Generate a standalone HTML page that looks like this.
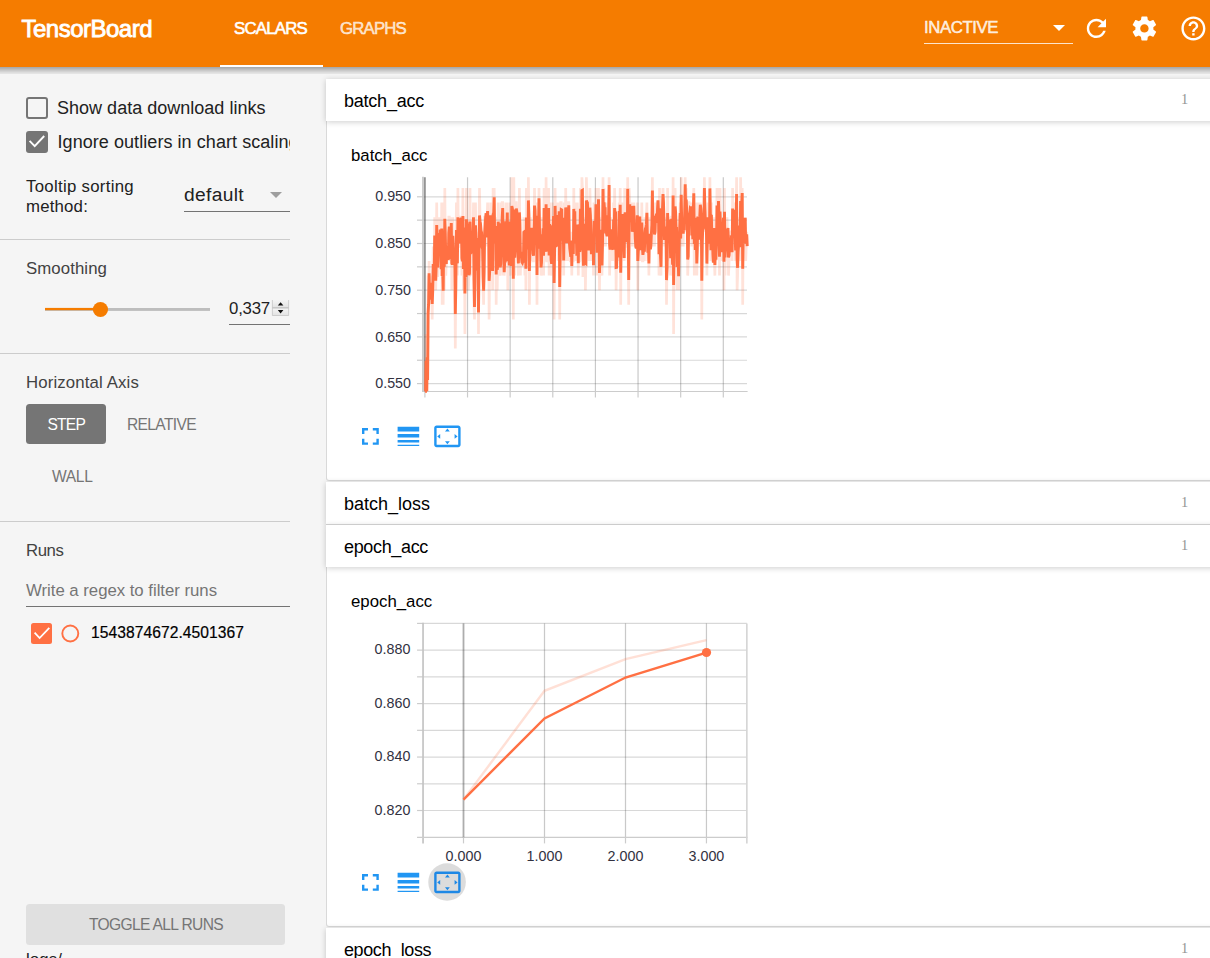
<!DOCTYPE html>
<html lang="en">
<head>
<meta charset="utf-8">
<title>TensorBoard</title>
<style>
html,body{margin:0;padding:0}
body{width:1210px;height:958px;overflow:hidden;background:#f5f5f5;position:relative;font-family:"Liberation Sans",Arial,sans-serif;-webkit-font-smoothing:antialiased}
.b,.t,.ic{position:absolute;display:block}
.t{white-space:nowrap;line-height:24px;height:24px}
.hd{position:absolute;left:0;top:0;z-index:6}
.sb,.ct{position:absolute;left:0;top:0}
.tk{font-family:"Liberation Sans",Arial,sans-serif;font-size:14.3px;fill:#32313f}
</style>
</head>
<body>
<header class="b" style="left:0;top:0;width:1210px;height:67px;background:#f57c00;z-index:5"></header>
<div class="b" style="left:-20px;top:67px;width:1250px;height:7px;z-index:4;box-shadow:inset 0 6px 7px -3px rgba(0,0,0,0.4)"></div>
<nav class="hd">
<div id="title" class="t " style="left:21.50px;top:17.00px;font-size:24.00px;color:#fff;font-weight:400;font-family:'Liberation Sans',Arial,sans-serif;letter-spacing:-0.507px;-webkit-text-stroke:0.85px #fff;">TensorBoard</div>
<div id="tab1" class="t " style="left:234.00px;top:17.00px;font-size:16.80px;color:#fff;font-weight:400;font-family:'Liberation Sans',Arial,sans-serif;letter-spacing:-0.763px;-webkit-text-stroke:0.6px #fff;">SCALARS</div>
<div id="tab2" class="t " style="left:340.00px;top:17.00px;font-size:16.80px;color:rgba(255,255,255,0.72);font-weight:400;font-family:'Liberation Sans',Arial,sans-serif;letter-spacing:-0.812px;-webkit-text-stroke:0.6px rgba(255,255,255,0.72);">GRAPHS</div>
<div class="b" style="left:220.00px;top:65.00px;width:102.60px;height:2.00px;background:#fff"></div>
<div id="inactive" class="t " style="left:924.00px;top:16.00px;font-size:16.80px;color:rgba(255,255,255,0.82);font-weight:400;font-family:'Liberation Sans',Arial,sans-serif;letter-spacing:-0.426px;-webkit-text-stroke:0.55px rgba(255,255,255,0.82);">INACTIVE</div>
<div class="b" style="left:924.00px;top:43.00px;width:149.00px;height:1.00px;background:rgba(255,255,255,0.8)"></div>
<svg class="ic" style="left:1052.5px;top:25px" width="12" height="7" viewBox="0 0 12 7"><path d="M0 0h12L6 6z" fill="#fff"/></svg>
<svg class="ic" style="left:1082.00px;top:13.60px" width="28.80" height="28.80" viewBox="0 0 24 24"><path fill="#fff" d="M17.65 6.35C16.2 4.9 14.21 4 12 4c-4.42 0-7.99 3.58-7.99 8s3.57 8 7.99 8c3.73 0 6.84-2.55 7.73-6h-2.08c-.82 2.33-3.04 4-5.65 4-3.31 0-6-2.69-6-6s2.69-6 6-6c1.66 0 3.14.69 4.22 1.78L13 11h7V4l-2.35 2.35z"/></svg>
<svg class="ic" style="left:1130.40px;top:13.60px" width="28.80" height="28.80" viewBox="0 0 24 24"><path fill="#fff" d="M19.43 12.98c.04-.32.07-.64.07-.98s-.03-.66-.07-.98l2.11-1.65c.19-.15.24-.42.12-.64l-2-3.46c-.12-.22-.39-.3-.61-.22l-2.49 1c-.52-.4-1.08-.73-1.69-.98l-.38-2.65C14.46 2.18 14.25 2 14 2h-4c-.25 0-.46.18-.49.42l-.38 2.65c-.61.25-1.17.59-1.69.98l-2.49-1c-.23-.09-.49 0-.61.22l-2 3.46c-.13.22-.07.49.12.64l2.11 1.65c-.04.32-.07.65-.07.98s.03.66.07.98l-2.11 1.65c-.19.15-.24.42-.12.64l2 3.46c.12.22.39.3.61.22l2.49-1c.52.4 1.08.73 1.69.98l.38 2.65c.03.24.24.42.49.42h4c.25 0 .46-.18.49-.42l.38-2.65c.61-.25 1.17-.59 1.69-.98l2.49 1c.23.09.49 0 .61-.22l2-3.46c.12-.22.07-.49-.12-.64l-2.11-1.65zM12 15.5c-1.93 0-3.5-1.57-3.5-3.5s1.57-3.5 3.5-3.5 3.5 1.57 3.5 3.5-1.57 3.5-3.5 3.5z"/></svg>
<svg class="ic" style="left:1178.90px;top:13.60px" width="28.80" height="28.80" viewBox="0 0 24 24"><path fill="#fff" d="M11 18h2v-2h-2v2zm1-16C6.48 2 2 6.48 2 12s4.48 10 10 10 10-4.48 10-10S17.52 2 12 2zm0 18c-4.41 0-8-3.59-8-8s3.59-8 8-8 8 3.59 8 8-3.59 8-8 8zm0-14c-2.21 0-4 1.79-4 4h2c0-1.1.9-2 2-2s2 .9 2 2c0 2-3 1.75-3 5h2c0-2.25 3-2.5 3-5 0-2.21-1.79-4-4-4z"/></svg>
</nav>
<aside class="sb">
<div class="b" style="left:26.00px;top:97.00px;width:22.00px;height:22.00px;box-sizing:border-box;border:2.4px solid #757575;border-radius:3px"></div>
<div id="cb1" class="t " style="left:57.00px;top:96.00px;font-size:18.00px;color:#212121;font-weight:400;font-family:'Liberation Sans',Arial,sans-serif;letter-spacing:0.015px;">Show data download links</div>
<div class="b" style="left:26.00px;top:131.00px;width:22.00px;height:22.00px;background:#757575;border-radius:3px"></div>
<svg class="ic" style="left:26px;top:131px" width="22" height="22" viewBox="0 0 22 22"><path d="M3.600 9.900L8.700 15.200L18.200 5" fill="none" stroke="#fff" stroke-width="1.900"/></svg>
<div class="b" style="left:57.5px;top:120px;width:232.5px;height:40px;overflow:hidden"><div id="cb2" class="t " style="left:0.00px;top:10.00px;font-size:18.00px;color:#212121;font-weight:400;font-family:'Liberation Sans',Arial,sans-serif;letter-spacing:0.062px;">Ignore outliers in chart scaling</div></div>
<div id="tt1" class="t " style="left:26.00px;top:175.00px;font-size:16.80px;color:#212121;font-weight:400;font-family:'Liberation Sans',Arial,sans-serif;letter-spacing:0.297px;">Tooltip sorting</div>
<div id="tt2" class="t " style="left:26.00px;top:195.00px;font-size:16.80px;color:#212121;font-weight:400;font-family:'Liberation Sans',Arial,sans-serif;letter-spacing:0.194px;">method:</div>
<div id="dflt" class="t " style="left:184.00px;top:183.00px;font-size:19.20px;color:#212121;font-weight:400;font-family:'Liberation Sans',Arial,sans-serif;letter-spacing:0.342px;">default</div>
<div class="b" style="left:184.00px;top:211.00px;width:106.00px;height:1.00px;background:#737373"></div>
<svg class="ic" style="left:270px;top:192px" width="12" height="6" viewBox="0 0 12 6"><path d="M0 0h12L6 6z" fill="#9e9e9e"/></svg>
<div class="b" style="left:0.00px;top:239.00px;width:290.00px;height:1.00px;background:#ccc"></div>
<div id="smooth" class="t " style="left:26.00px;top:257.00px;font-size:16.80px;color:#424242;font-weight:400;font-family:'Liberation Sans',Arial,sans-serif;letter-spacing:0.085px;">Smoothing</div>
<svg class="ic" style="left:40px;top:300px" width="180" height="20" viewBox="40 300 180 20"><rect x="45" y="308" width="165" height="2.900" fill="#bdbdbd"/><rect x="45" y="307.900" width="55" height="2.300" fill="#f57c00"/><circle cx="100.450" cy="309.500" r="7.600" fill="#f57c00"/></svg>
<div id="sval" class="t " style="left:229.00px;top:297.00px;font-size:16.80px;color:#212121;font-weight:400;font-family:'Liberation Sans',Arial,sans-serif;letter-spacing:-0.200px;">0,337</div>
<svg class="ic" style="left:271px;top:299px" width="20" height="18" viewBox="271 299 20 18"><defs><linearGradient id="sg" x1="0" y1="0" x2="0" y2="1"><stop offset="0" stop-color="#f4f4f4"/><stop offset="1" stop-color="#e2e2e2"/></linearGradient></defs><rect x="272" y="300" width="17" height="7.800" fill="url(#sg)"/><rect x="272" y="308.300" width="17" height="7.500" fill="url(#sg)"/><rect x="272" y="307.400" width="17" height="1" fill="#b4b4b4"/><path d="M272.400 300v15.500h16.200V300" fill="none" stroke="#c6c6c6" stroke-width="0.800"/><path d="M277.800 305.600h5.600l-2.800-3.400zM277.800 310h5.600l-2.800 3.400z" fill="#111"/></svg>
<div class="b" style="left:229.00px;top:323.50px;width:61.00px;height:1.00px;background:#737373"></div>
<div class="b" style="left:0.00px;top:352.50px;width:290.00px;height:1.00px;background:#ccc"></div>
<div id="haxis" class="t " style="left:26.00px;top:371.00px;font-size:16.80px;color:#424242;font-weight:400;font-family:'Liberation Sans',Arial,sans-serif;letter-spacing:0.133px;">Horizontal Axis</div>
<div class="b" style="left:26.00px;top:404.00px;width:80.00px;height:40.00px;background:#757575;border-radius:3.500px"></div>
<div id="step" class="t " style="left:47.50px;top:413.00px;font-size:15.60px;color:#fff;font-weight:400;font-family:'Liberation Sans',Arial,sans-serif;letter-spacing:-0.809px;">STEP</div>
<div id="rel" class="t " style="left:127.00px;top:413.00px;font-size:15.60px;color:#757575;font-weight:400;font-family:'Liberation Sans',Arial,sans-serif;letter-spacing:-0.656px;">RELATIVE</div>
<div id="wall" class="t " style="left:52.00px;top:465.00px;font-size:15.60px;color:#757575;font-weight:400;font-family:'Liberation Sans',Arial,sans-serif;letter-spacing:-0.348px;">WALL</div>
<div class="b" style="left:0.00px;top:520.50px;width:290.00px;height:1.00px;background:#ccc"></div>
<div id="runs" class="t " style="left:26.00px;top:539.00px;font-size:16.80px;color:#424242;font-weight:400;font-family:'Liberation Sans',Arial,sans-serif;letter-spacing:-0.422px;">Runs</div>
<div id="regex" class="t " style="left:26.00px;top:579.00px;font-size:16.80px;color:#757575;font-weight:400;font-family:'Liberation Sans',Arial,sans-serif;letter-spacing:-0.029px;">Write a regex to filter runs</div>
<div class="b" style="left:26.00px;top:605.50px;width:264.00px;height:1.00px;background:#737373"></div>
<div class="b" style="left:31.00px;top:623.00px;width:21.00px;height:21.00px;background:#ff7043;border-radius:2.5px"></div>
<svg class="ic" style="left:31px;top:623px" width="21" height="21" viewBox="0 0 21 21"><path d="M3.600 9.700L8.600 15L18.300 4.900" fill="none" stroke="#fff" stroke-width="1.800"/></svg>
<svg class="ic" style="left:60px;top:623px" width="21" height="21" viewBox="0 0 21 21"><circle cx="10.300" cy="10.500" r="8" fill="none" stroke="#ff7043" stroke-width="1.900"/></svg>
<div id="run" class="t " style="left:91.00px;top:621.00px;font-size:15.60px;color:#000;font-weight:400;font-family:'Liberation Sans',Arial,sans-serif;letter-spacing:0.069px;-webkit-text-stroke:0.2px #000;">1543874672.4501367</div>
<div class="b" style="left:26.00px;top:904.30px;width:259.00px;height:40.30px;background:#e0e0e0;border-radius:3.5px"></div>
<div id="toggle" class="t " style="left:89.00px;top:913.00px;font-size:15.60px;color:#757575;font-weight:400;font-family:'Liberation Sans',Arial,sans-serif;letter-spacing:-0.658px;">TOGGLE ALL RUNS</div>
<div id="logs" class="t " style="left:26.00px;top:948.00px;font-size:16.80px;color:#212121;font-weight:400;font-family:'Liberation Sans',Arial,sans-serif;letter-spacing:0.109px;">logs/</div>
</aside>
<main class="ct">
<div class="b" style="left:326.00px;top:79.00px;width:920.00px;height:42.00px;background:#fff;box-shadow:0 1.2px 6px rgba(0,0,0,0.2);z-index:2"></div><div id="h1" class="t " style="left:344.00px;top:88.80px;font-size:18.00px;color:#000;font-weight:400;font-family:'Liberation Sans',Arial,sans-serif;letter-spacing:-0.229px;z-index:3;">batch_acc</div><div id="n1" class="t " style="left:1181.00px;top:87.00px;font-size:14.40px;color:#949494;font-weight:400;font-family:'Liberation Serif',serif;z-index:3;">1</div>
<div class="b" style="left:326.00px;top:121.00px;width:890.00px;height:360.00px;background:#fff;border:1px solid #d9d9d9;border-top:0;border-radius:0 0 0 3px;box-sizing:border-box"></div>
<div id="ct1" class="t " style="left:351.00px;top:144.00px;font-size:16.80px;color:#000;font-weight:400;font-family:'Liberation Sans',Arial,sans-serif;">batch_acc</div><svg class="ic ch" style="left:340px;top:161px" width="440" height="300" viewBox="340 161 440 300"><line x1="423.00" y1="196.80" x2="747.00" y2="196.80" stroke="#3c3c3c" stroke-width="1.2" stroke-opacity="0.2"/><line x1="417.00" y1="196.80" x2="423.00" y2="196.80" stroke="#cccccc" stroke-width="1.2" stroke-opacity="1"/><line x1="423.00" y1="220.15" x2="747.00" y2="220.15" stroke="#3c3c3c" stroke-width="1.2" stroke-opacity="0.2"/><line x1="417.00" y1="220.15" x2="423.00" y2="220.15" stroke="#cccccc" stroke-width="1.2" stroke-opacity="1"/><line x1="423.00" y1="243.50" x2="747.00" y2="243.50" stroke="#3c3c3c" stroke-width="1.2" stroke-opacity="0.2"/><line x1="417.00" y1="243.50" x2="423.00" y2="243.50" stroke="#cccccc" stroke-width="1.2" stroke-opacity="1"/><line x1="423.00" y1="266.85" x2="747.00" y2="266.85" stroke="#3c3c3c" stroke-width="1.2" stroke-opacity="0.2"/><line x1="417.00" y1="266.85" x2="423.00" y2="266.85" stroke="#cccccc" stroke-width="1.2" stroke-opacity="1"/><line x1="423.00" y1="290.20" x2="747.00" y2="290.20" stroke="#3c3c3c" stroke-width="1.2" stroke-opacity="0.2"/><line x1="417.00" y1="290.20" x2="423.00" y2="290.20" stroke="#cccccc" stroke-width="1.2" stroke-opacity="1"/><line x1="423.00" y1="313.55" x2="747.00" y2="313.55" stroke="#3c3c3c" stroke-width="1.2" stroke-opacity="0.2"/><line x1="417.00" y1="313.55" x2="423.00" y2="313.55" stroke="#cccccc" stroke-width="1.2" stroke-opacity="1"/><line x1="423.00" y1="336.90" x2="747.00" y2="336.90" stroke="#3c3c3c" stroke-width="1.2" stroke-opacity="0.2"/><line x1="417.00" y1="336.90" x2="423.00" y2="336.90" stroke="#cccccc" stroke-width="1.2" stroke-opacity="1"/><line x1="423.00" y1="360.25" x2="747.00" y2="360.25" stroke="#3c3c3c" stroke-width="1.2" stroke-opacity="0.2"/><line x1="417.00" y1="360.25" x2="423.00" y2="360.25" stroke="#cccccc" stroke-width="1.2" stroke-opacity="1"/><line x1="423.00" y1="383.60" x2="747.00" y2="383.60" stroke="#3c3c3c" stroke-width="1.2" stroke-opacity="0.2"/><line x1="417.00" y1="383.60" x2="423.00" y2="383.60" stroke="#cccccc" stroke-width="1.2" stroke-opacity="1"/><line x1="467.53" y1="177.30" x2="467.53" y2="391.50" stroke="#3c3c3c" stroke-width="1.2" stroke-opacity="0.28"/><line x1="467.53" y1="391.50" x2="467.53" y2="397.50" stroke="#cccccc" stroke-width="1.2" stroke-opacity="1"/><line x1="510.16" y1="177.30" x2="510.16" y2="391.50" stroke="#3c3c3c" stroke-width="1.2" stroke-opacity="0.28"/><line x1="510.16" y1="391.50" x2="510.16" y2="397.50" stroke="#cccccc" stroke-width="1.2" stroke-opacity="1"/><line x1="552.79" y1="177.30" x2="552.79" y2="391.50" stroke="#3c3c3c" stroke-width="1.2" stroke-opacity="0.28"/><line x1="552.79" y1="391.50" x2="552.79" y2="397.50" stroke="#cccccc" stroke-width="1.2" stroke-opacity="1"/><line x1="595.42" y1="177.30" x2="595.42" y2="391.50" stroke="#3c3c3c" stroke-width="1.2" stroke-opacity="0.28"/><line x1="595.42" y1="391.50" x2="595.42" y2="397.50" stroke="#cccccc" stroke-width="1.2" stroke-opacity="1"/><line x1="638.05" y1="177.30" x2="638.05" y2="391.50" stroke="#3c3c3c" stroke-width="1.2" stroke-opacity="0.28"/><line x1="638.05" y1="391.50" x2="638.05" y2="397.50" stroke="#cccccc" stroke-width="1.2" stroke-opacity="1"/><line x1="680.68" y1="177.30" x2="680.68" y2="391.50" stroke="#3c3c3c" stroke-width="1.2" stroke-opacity="0.28"/><line x1="680.68" y1="391.50" x2="680.68" y2="397.50" stroke="#cccccc" stroke-width="1.2" stroke-opacity="1"/><line x1="723.31" y1="177.30" x2="723.31" y2="391.50" stroke="#3c3c3c" stroke-width="1.2" stroke-opacity="0.28"/><line x1="723.31" y1="391.50" x2="723.31" y2="397.50" stroke="#cccccc" stroke-width="1.2" stroke-opacity="1"/><line x1="423.00" y1="176.70" x2="423.00" y2="392.10" stroke="#c4c4c4" stroke-width="1.7" stroke-opacity="1"/><line x1="422.15" y1="391.50" x2="747.60" y2="391.50" stroke="#cccccc" stroke-width="1.2" stroke-opacity="1"/><line x1="424.90" y1="177.30" x2="424.90" y2="391.50" stroke="#3c3c3c" stroke-width="1.8" stroke-opacity="0.55"/><line x1="424.90" y1="391.50" x2="424.90" y2="397.50" stroke="#cccccc" stroke-width="1.2" stroke-opacity="1"/><polyline points="425.1,391.2 425.6,391.2 426.1,334.0 426.6,391.2 427.1,334.0 427.6,391.2 428.1,275.6 428.6,304.8 429.1,261.0 429.6,304.8 430.1,275.6 430.6,290.2 431.1,304.8 431.7,275.6 432.2,319.4 432.7,290.2 433.2,246.4 433.7,275.6 434.2,275.6 434.7,217.2 435.2,261.0 435.7,290.2 436.2,261.0 436.7,202.6 437.2,275.6 437.7,275.6 438.2,217.2 438.7,261.0 439.2,261.0 439.7,246.4 440.2,217.2 440.7,261.0 441.2,275.6 441.7,202.6 442.2,304.8 442.7,261.0 443.2,304.8 443.8,202.6 444.3,290.2 444.8,188.0 445.3,246.4 445.8,275.6 446.3,261.0 446.8,246.4 447.3,246.4 447.8,246.4 448.3,261.0 448.8,217.2 449.3,217.2 449.8,246.4 450.3,261.0 450.8,231.8 451.3,217.2 451.8,290.2 452.3,261.0 452.8,217.2 453.3,261.0 453.8,261.0 454.3,246.4 454.8,246.4 455.3,348.6 455.8,275.6 456.4,202.6 456.9,246.4 457.4,275.6 457.9,188.0 458.4,246.4 458.9,246.4 459.4,217.2 459.9,217.2 460.4,231.8 460.9,217.2 461.4,217.2 461.9,275.6 462.4,261.0 462.9,188.0 463.4,290.2 463.9,261.0 464.4,217.2 464.9,334.0 465.4,231.8 465.9,290.2 466.4,188.0 466.9,231.8 467.4,231.8 467.9,231.8 468.4,290.2 469.0,275.6 469.5,275.6 470.0,188.0 470.5,275.6 471.0,246.4 471.5,246.4 472.0,231.8 472.5,231.8 473.0,231.8 473.5,202.6 474.0,304.8 474.5,319.4 475.0,231.8 475.5,202.6 476.0,246.4 476.5,261.0 477.0,231.8 477.5,290.2 478.0,261.0 478.5,334.0 479.0,231.8 479.5,188.0 480.0,217.2 480.5,231.8 481.1,231.8 481.6,231.8 482.1,261.0 482.6,246.4 483.1,290.2 483.6,304.8 484.1,261.0 484.6,217.2 485.1,217.2 485.6,217.2 486.1,217.2 486.6,246.4 487.1,217.2 487.6,202.6 488.1,246.4 488.6,217.2 489.1,319.4 489.6,275.6 490.1,231.8 490.6,202.6 491.1,231.8 491.6,246.4 492.1,231.8 492.6,290.2 493.1,188.0 493.7,217.2 494.2,188.0 494.7,261.0 495.2,231.8 495.7,217.2 496.2,304.8 496.7,231.8 497.2,290.2 497.7,261.0 498.2,202.6 498.7,231.8 499.2,275.6 499.7,261.0 500.2,275.6 500.7,261.0 501.2,202.6 501.7,246.4 502.2,202.6 502.7,202.6 503.2,275.6 503.7,261.0 504.2,275.6 504.7,261.0 505.2,261.0 505.8,202.6 506.3,231.8 506.8,231.8 507.3,202.6 507.8,290.2 508.3,217.2 508.8,261.0 509.3,275.6 509.8,261.0 510.3,202.6 510.8,246.4 511.3,275.6 511.8,177.3 512.3,202.6 512.8,217.2 513.3,319.4 513.8,177.3 514.3,246.4 514.8,275.6 515.3,246.4 515.8,202.6 516.3,202.6 516.8,217.2 517.3,246.4 517.8,246.4 518.4,275.6 518.9,231.8 519.4,188.0 519.9,231.8 520.4,275.6 520.9,246.4 521.4,261.0 521.9,261.0 522.4,261.0 522.9,261.0 523.4,261.0 523.9,217.2 524.4,231.8 524.9,275.6 525.4,217.2 525.9,290.2 526.4,188.0 526.9,246.4 527.4,246.4 527.9,261.0 528.4,177.3 528.9,217.2 529.4,304.8 529.9,246.4 530.5,217.2 531.0,231.8 531.5,231.8 532.0,261.0 532.5,231.8 533.0,261.0 533.5,261.0 534.0,231.8 534.5,188.0 535.0,217.2 535.5,231.8 536.0,246.4 536.5,202.6 537.0,304.8 537.5,202.6 538.0,246.4 538.5,231.8 539.0,188.0 539.5,246.4 540.0,261.0 540.5,246.4 541.0,275.6 541.5,261.0 542.0,217.2 542.5,261.0 543.1,217.2 543.6,275.6 544.1,188.0 544.6,217.2 545.1,261.0 545.6,246.4 546.1,177.3 546.6,261.0 547.1,261.0 547.6,246.4 548.1,231.8 548.6,188.0 549.1,275.6 549.6,202.6 550.1,246.4 550.6,246.4 551.1,275.6 551.6,261.0 552.1,246.4 552.6,202.6 553.1,231.8 553.6,217.2 554.1,319.4 554.6,231.8 555.1,188.0 555.7,246.4 556.2,246.4 556.7,246.4 557.2,202.6 557.7,231.8 558.2,261.0 558.7,217.2 559.2,202.6 559.7,319.4 560.2,231.8 560.7,202.6 561.2,202.6 561.7,217.2 562.2,261.0 562.7,217.2 563.2,217.2 563.7,275.6 564.2,202.6 564.7,231.8 565.2,246.4 565.7,188.0 566.2,231.8 566.7,261.0 567.2,231.8 567.8,217.2 568.3,202.6 568.8,202.6 569.3,261.0 569.8,246.4 570.3,261.0 570.8,261.0 571.3,231.8 571.8,275.6 572.3,231.8 572.8,261.0 573.3,261.0 573.8,188.0 574.3,246.4 574.8,202.6 575.3,261.0 575.8,231.8 576.3,231.8 576.8,261.0 577.3,202.6 577.8,231.8 578.3,275.6 578.8,217.2 579.3,261.0 579.8,261.0 580.4,188.0 580.9,231.8 581.4,261.0 581.9,177.3 582.4,188.0 582.9,275.6 583.4,275.6 583.9,217.2 584.4,246.4 584.9,217.2 585.4,290.2 585.9,261.0 586.4,177.3 586.9,202.6 587.4,202.6 587.9,217.2 588.4,246.4 588.9,261.0 589.4,246.4 589.9,188.0 590.4,217.2 590.9,246.4 591.4,261.0 591.9,231.8 592.5,261.0 593.0,231.8 593.5,275.6 594.0,202.6 594.5,231.8 595.0,246.4 595.5,217.2 596.0,188.0 596.5,217.2 597.0,275.6 597.5,188.0 598.0,217.2 598.5,188.0 599.0,246.4 599.5,290.2 600.0,231.8 600.5,217.2 601.0,246.4 601.5,261.0 602.0,275.6 602.5,231.8 603.0,177.3 603.5,246.4 604.0,188.0 604.5,217.2 605.1,202.6 605.6,246.4 606.1,217.2 606.6,231.8 607.1,231.8 607.6,202.6 608.1,217.2 608.6,217.2 609.1,177.3 609.6,275.6 610.1,246.4 610.6,217.2 611.1,246.4 611.6,246.4 612.1,217.2 612.6,261.0 613.1,246.4 613.6,202.6 614.1,246.4 614.6,188.0 615.1,217.2 615.6,217.2 616.1,290.2 616.6,261.0 617.2,231.8 617.7,261.0 618.2,246.4 618.7,231.8 619.2,202.6 619.7,231.8 620.2,188.0 620.7,304.8 621.2,231.8 621.7,231.8 622.2,202.6 622.7,231.8 623.2,246.4 623.7,246.4 624.2,261.0 624.7,188.0 625.2,217.2 625.7,217.2 626.2,217.2 626.7,246.4 627.2,246.4 627.7,177.3 628.2,261.0 628.7,304.8 629.2,188.0 629.8,202.6 630.3,217.2 630.8,217.2 631.3,231.8 631.8,202.6 632.3,246.4 632.8,231.8 633.3,217.2 633.8,202.6 634.3,231.8 634.8,217.2 635.3,246.4 635.8,246.4 636.3,246.4 636.8,231.8 637.3,202.6 637.8,290.2 638.3,246.4 638.8,246.4 639.3,217.2 639.8,217.2 640.3,261.0 640.8,217.2 641.3,261.0 641.8,202.6 642.4,261.0 642.9,261.0 643.4,246.4 643.9,231.8 644.4,261.0 644.9,217.2 645.4,231.8 645.9,231.8 646.4,217.2 646.9,202.6 647.4,246.4 647.9,261.0 648.4,231.8 648.9,275.6 649.4,217.2 649.9,246.4 650.4,246.4 650.9,246.4 651.4,231.8 651.9,217.2 652.4,177.3 652.9,246.4 653.4,217.2 653.9,217.2 654.5,246.4 655.0,231.8 655.5,202.6 656.0,217.2 656.5,217.2 657.0,231.8 657.5,202.6 658.0,202.6 658.5,217.2 659.0,275.6 659.5,188.0 660.0,246.4 660.5,261.0 661.0,275.6 661.5,217.2 662.0,202.6 662.5,202.6 663.0,188.0 663.5,202.6 664.0,231.8 664.5,246.4 665.0,231.8 665.5,217.2 666.0,231.8 666.5,304.8 667.1,261.0 667.6,188.0 668.1,246.4 668.6,217.2 669.1,261.0 669.6,231.8 670.1,231.8 670.6,275.6 671.1,217.2 671.6,217.2 672.1,261.0 672.6,275.6 673.1,177.3 673.6,334.0 674.1,231.8 674.6,231.8 675.1,188.0 675.6,217.2 676.1,231.8 676.6,231.8 677.1,290.2 677.6,246.4 678.1,246.4 678.6,290.2 679.2,217.2 679.7,217.2 680.2,202.6 680.7,246.4 681.2,177.3 681.7,231.8 682.2,231.8 682.7,217.2 683.2,246.4 683.7,217.2 684.2,231.8 684.7,202.6 685.2,177.3 685.7,231.8 686.2,188.0 686.7,217.2 687.2,217.2 687.7,275.6 688.2,261.0 688.7,202.6 689.2,202.6 689.7,217.2 690.2,202.6 690.7,217.2 691.2,202.6 691.8,246.4 692.3,217.2 692.8,246.4 693.3,202.6 693.8,188.0 694.3,275.6 694.8,231.8 695.3,261.0 695.8,202.6 696.3,246.4 696.8,275.6 697.3,246.4 697.8,202.6 698.3,217.2 698.8,246.4 699.3,217.2 699.8,217.2 700.3,202.6 700.8,217.2 701.3,217.2 701.8,319.4 702.3,217.2 702.8,217.2 703.3,231.8 703.9,217.2 704.4,177.3 704.9,217.2 705.4,231.8 705.9,217.2 706.4,231.8 706.9,275.6 707.4,217.2 707.9,202.6 708.4,246.4 708.9,217.2 709.4,246.4 709.9,177.3 710.4,231.8 710.9,261.0 711.4,202.6 711.9,261.0 712.4,231.8 712.9,261.0 713.4,261.0 713.9,217.2 714.4,261.0 714.9,275.6 715.4,231.8 715.9,261.0 716.5,231.8 717.0,188.0 717.5,246.4 718.0,217.2 718.5,188.0 719.0,217.2 719.5,275.6 720.0,188.0 720.5,231.8 721.0,217.2 721.5,231.8 722.0,261.0 722.5,217.2 723.0,231.8 723.5,217.2 724.0,290.2 724.5,188.0 725.0,275.6 725.5,246.4 726.0,246.4 726.5,261.0 727.0,217.2 727.5,231.8 728.0,231.8 728.5,275.6 729.1,261.0 729.6,231.8 730.1,246.4 730.6,246.4 731.1,231.8 731.6,231.8 732.1,261.0 732.6,188.0 733.1,246.4 733.6,217.2 734.1,217.2 734.6,202.6 735.1,246.4 735.6,261.0 736.1,217.2 736.6,177.3 737.1,290.2 737.6,275.6 738.1,246.4 738.6,246.4 739.1,231.8 739.6,217.2 740.1,261.0 740.6,177.3 741.2,217.2 741.7,202.6 742.2,188.0 742.7,304.8 743.2,217.2 743.7,246.4 744.2,217.2 744.7,231.8 745.2,217.2 745.7,261.0 746.2,246.4 746.7,231.8 747.2,246.4" fill="none" stroke="#ff7043" stroke-opacity="0.2" stroke-width="2.700"/><polyline points="425.1,391.2 425.6,391.2 426.1,360.7 426.6,391.2 427.1,357.2 427.6,380.0 428.1,313.3 428.6,304.2 429.1,273.3 429.6,297.2 430.1,283.7 430.6,290.5 431.1,299.7 431.7,282.8 432.2,304.0 432.7,291.2 433.2,264.1 433.7,266.9 434.2,275.9 434.7,235.6 435.2,254.8 435.7,280.8 436.2,266.5 436.7,225.1 437.2,257.8 437.7,267.6 438.2,232.9 438.7,251.0 439.2,253.5 439.7,244.8 440.2,229.5 440.7,253.5 441.2,269.1 441.7,228.4 442.2,276.0 442.7,270.5 443.2,290.7 443.8,230.5 444.3,266.7 444.8,218.7 445.3,233.9 445.8,258.7 446.3,264.0 446.8,248.4 447.3,247.9 447.8,246.2 448.3,260.0 448.8,233.0 449.3,226.5 449.8,243.7 450.3,258.9 450.8,240.3 451.3,223.0 451.8,263.2 452.3,264.6 452.8,235.9 453.3,248.1 453.8,256.7 454.3,248.5 454.8,250.6 455.3,313.9 455.8,287.2 456.4,230.0 456.9,239.4 457.4,263.4 457.9,217.3 458.4,233.4 458.9,243.4 459.4,228.7 459.9,218.2 460.4,229.4 460.9,221.0 461.4,217.6 461.9,258.2 462.4,261.2 462.9,215.9 463.4,269.0 463.9,259.4 464.4,227.4 464.9,293.5 465.4,250.4 465.9,277.1 466.4,219.3 466.9,227.9 467.4,226.7 467.9,230.3 468.4,270.9 469.0,275.1 469.5,273.4 470.0,221.4 470.5,253.6 471.0,252.4 471.5,252.2 472.0,235.4 472.5,231.6 473.0,234.5 473.5,217.3 474.0,279.5 474.5,306.9 475.0,258.5 475.5,225.3 476.0,239.2 476.5,253.9 477.0,238.1 477.5,268.4 478.0,268.1 478.5,312.5 479.0,259.0 479.5,215.5 480.0,221.2 480.5,223.7 481.1,231.1 481.6,232.6 482.1,247.6 482.6,249.1 483.1,276.3 483.6,290.7 484.1,273.0 484.6,234.7 485.1,226.2 485.6,217.8 486.1,213.2 486.6,237.5 487.1,220.7 487.6,211.1 488.1,230.7 488.6,218.7 489.1,280.8 489.6,273.2 490.1,248.3 490.6,215.2 491.1,229.4 491.6,245.4 492.1,234.8 492.6,270.9 493.1,214.5 493.7,212.7 494.2,197.3 494.7,243.3 495.2,240.2 495.7,226.0 496.2,274.4 496.7,242.3 497.2,269.8 497.7,266.0 498.2,221.7 498.7,228.0 499.2,262.1 499.7,260.8 500.2,267.4 500.7,263.8 501.2,223.3 501.7,237.3 502.2,217.5 502.7,208.1 503.2,256.8 503.7,255.8 504.2,272.3 504.7,261.3 505.2,262.6 505.8,221.3 506.3,229.9 506.8,234.6 507.3,212.5 507.8,261.3 508.3,236.2 508.8,256.5 509.3,265.4 509.8,259.9 510.3,221.4 510.8,234.2 511.3,265.9 511.8,206.0 512.3,208.0 512.8,211.9 513.3,278.7 513.8,209.6 514.3,234.6 514.8,257.7 515.3,245.8 515.8,220.7 516.3,208.5 516.8,211.5 517.3,236.3 517.8,247.1 518.4,263.4 518.9,246.1 519.4,212.4 519.9,223.0 520.4,255.5 520.9,251.8 521.4,256.7 521.9,262.0 522.4,262.8 522.9,260.9 523.4,262.5 523.9,232.2 524.4,231.8 524.9,258.1 525.4,231.8 525.9,268.8 526.4,217.4 526.9,232.8 527.4,238.3 527.9,249.4 528.4,200.4 528.9,215.3 529.4,270.9 529.9,250.9 530.5,228.1 531.0,230.2 531.5,227.7 532.0,250.5 532.5,235.2 533.0,253.5 533.5,255.7 534.0,237.9 534.5,205.6 535.0,210.0 535.5,225.8 536.0,234.8 536.5,215.7 537.0,274.9 537.5,222.5 538.0,233.7 538.5,229.7 539.0,198.3 539.5,227.7 540.0,248.6 540.5,243.6 541.0,267.4 541.5,262.6 542.0,234.3 542.5,251.6 543.1,228.2 543.6,255.8 544.1,208.1 544.6,217.8 545.1,248.8 545.6,251.8 546.1,204.2 546.6,237.6 547.1,248.5 547.6,249.3 548.1,237.7 548.6,208.1 549.1,255.4 549.6,224.1 550.1,238.3 550.6,242.0 551.1,260.0 551.6,263.8 552.1,255.7 552.6,225.3 553.1,227.7 553.6,216.0 554.1,282.9 554.6,251.5 555.1,205.9 555.7,234.5 556.2,245.8 556.7,245.5 557.2,215.1 557.7,229.5 558.2,246.3 558.7,228.1 559.2,211.3 559.7,287.1 560.2,253.8 560.7,218.0 561.2,209.6 561.7,209.9 562.2,240.6 562.7,229.2 563.2,223.8 563.7,260.5 564.2,217.7 564.7,225.3 565.2,236.9 565.7,207.4 566.2,221.2 566.7,243.2 567.2,237.1 567.8,222.3 568.3,214.0 568.8,205.3 569.3,240.9 569.8,248.6 570.3,252.6 570.8,256.9 571.3,240.6 571.8,266.0 572.3,242.0 572.8,251.0 573.3,253.9 573.8,208.9 574.3,231.4 574.8,211.3 575.3,243.4 575.8,231.4 576.3,232.5 576.8,255.8 577.3,224.8 577.8,225.9 578.3,263.3 578.8,229.8 579.3,249.0 579.8,252.1 580.4,208.7 580.9,221.1 581.4,250.6 581.9,190.5 582.4,190.2 582.9,245.1 583.4,265.8 583.9,237.9 584.4,248.1 584.9,223.8 585.4,263.2 585.9,263.6 586.4,200.4 586.9,202.2 587.4,202.6 587.9,210.2 588.4,231.7 588.9,250.4 589.4,245.3 589.9,207.7 590.4,215.4 590.9,232.0 591.4,254.2 591.9,235.6 592.5,249.7 593.0,237.2 593.5,265.3 594.0,220.9 594.5,225.0 595.0,236.3 595.5,228.3 596.0,204.3 596.5,215.7 597.0,252.8 597.5,210.2 598.0,219.5 598.5,199.2 599.0,230.2 599.5,273.0 600.0,250.0 600.5,229.7 601.0,242.4 601.5,259.4 602.0,265.5 602.5,244.8 603.0,189.1 603.5,229.1 604.0,202.4 604.5,209.4 605.1,207.4 605.6,233.5 606.1,225.7 606.6,233.7 607.1,236.2 607.6,218.1 608.1,215.5 608.6,220.0 609.1,184.9 609.6,244.9 610.1,249.6 610.6,229.4 611.1,238.0 611.6,248.4 612.1,229.5 612.6,248.5 613.1,249.5 613.6,219.4 614.1,234.5 614.6,208.1 615.1,214.2 615.6,211.5 616.1,267.4 616.6,267.3 617.2,244.3 617.7,257.3 618.2,248.3 618.7,238.9 619.2,211.0 619.7,225.2 620.2,204.8 620.7,272.7 621.2,245.5 621.7,233.9 622.2,214.1 622.7,226.3 623.2,241.9 623.7,241.2 624.2,258.0 624.7,215.3 625.2,212.5 625.7,216.8 626.2,220.8 626.7,239.8 627.2,242.0 627.7,188.7 628.2,233.0 628.7,280.1 629.2,216.0 629.8,204.2 630.3,216.8 630.8,216.2 631.3,222.2 631.8,206.0 632.3,231.6 632.8,229.4 633.3,220.7 633.8,205.7 634.3,227.5 634.8,224.9 635.3,238.8 635.8,246.2 636.3,248.3 636.8,234.9 637.3,215.2 637.8,261.0 638.3,251.3 638.8,245.4 639.3,228.4 639.8,216.6 640.3,250.1 640.8,230.0 641.3,249.5 641.8,222.5 642.4,246.9 642.9,254.9 643.4,251.4 643.9,238.9 644.4,251.7 644.9,233.4 645.4,228.6 645.9,228.3 646.4,224.4 646.9,212.8 647.4,239.5 647.9,252.6 648.4,238.6 648.9,263.5 649.4,233.7 649.9,246.6 650.4,249.3 650.9,245.4 651.4,233.6 651.9,225.0 652.4,190.5 652.9,231.4 653.4,217.4 653.9,218.3 654.5,234.5 655.0,232.4 655.5,215.9 656.0,217.6 656.5,213.8 657.0,222.9 657.5,209.1 658.0,200.4 658.5,213.2 659.0,254.2 659.5,208.3 660.0,234.7 660.5,256.1 661.0,266.9 661.5,234.1 662.0,212.0 662.5,208.6 663.0,194.0 663.5,202.6 664.0,222.9 664.5,239.9 665.0,232.4 665.5,226.8 666.0,228.3 666.5,280.1 667.1,267.8 667.6,213.1 668.1,236.3 668.6,219.6 669.1,242.9 669.6,231.4 670.1,234.5 670.6,258.3 671.1,232.1 671.6,218.7 672.1,248.2 672.6,264.7 673.1,195.5 673.6,285.0 674.1,245.9 674.6,236.1 675.1,206.4 675.6,211.8 676.1,229.5 676.6,226.9 677.1,267.0 677.6,256.6 678.1,254.7 678.6,276.3 679.2,239.3 679.7,229.1 680.2,213.0 680.7,238.6 681.2,194.7 681.7,221.4 682.2,227.2 682.7,223.0 683.2,233.7 683.7,227.3 684.2,230.2 684.7,212.0 685.2,184.2 685.7,211.4 686.2,199.5 686.7,210.6 687.2,214.8 687.7,259.6 688.2,256.4 688.7,224.8 689.2,214.7 689.7,217.1 690.2,209.8 690.7,210.7 691.2,206.4 691.8,235.5 692.3,223.5 692.8,239.1 693.3,211.1 693.8,193.3 694.3,244.0 694.8,232.8 695.3,250.0 695.8,217.8 696.3,233.1 696.8,263.5 697.3,248.3 697.8,216.6 698.3,219.5 698.8,239.6 699.3,220.7 699.8,216.4 700.3,204.8 700.8,208.3 701.3,216.5 701.8,280.8 702.3,241.4 702.8,228.0 703.3,229.4 703.9,221.8 704.4,188.1 704.9,208.9 705.4,223.2 705.9,221.0 706.4,229.3 706.9,263.6 707.4,236.4 707.9,217.3 708.4,232.6 708.9,224.6 709.4,243.6 709.9,188.4 710.4,216.8 710.9,250.2 711.4,214.9 711.9,242.9 712.4,233.0 712.9,254.5 713.4,262.7 713.9,228.0 714.4,254.6 714.9,265.0 715.4,245.7 715.9,259.7 716.5,244.0 717.0,205.6 717.5,230.1 718.0,223.2 718.5,201.1 719.0,216.5 719.5,256.8 720.0,211.5 720.5,225.8 721.0,221.9 721.5,225.4 722.0,252.3 722.5,231.3 723.0,229.6 723.5,217.8 724.0,261.7 724.5,211.8 725.0,257.4 725.5,249.3 726.0,245.7 726.5,251.0 727.0,229.0 727.5,231.5 728.0,228.0 728.5,257.4 729.1,255.1 729.6,239.9 730.1,242.4 730.6,246.0 731.1,238.0 731.6,238.5 732.1,252.2 732.6,208.6 733.1,236.8 733.6,219.8 734.1,215.9 734.6,209.7 735.1,235.0 735.6,250.4 736.1,228.3 736.6,194.0 737.1,259.1 737.6,267.8 738.1,251.8 738.6,244.9 739.1,240.5 739.6,225.5 740.1,247.3 740.6,201.1 741.2,207.7 741.7,205.1 742.2,193.1 742.7,268.8 743.2,238.5 743.7,243.8 744.2,226.1 744.7,231.3 745.2,217.9 745.7,243.5 746.2,241.9 746.7,234.2 747.2,246.1" fill="none" stroke="#ff7043" stroke-width="2.900"/><text x="411.00" y="201.40" text-anchor="end" class="tk">0.950</text><text x="411.00" y="248.10" text-anchor="end" class="tk">0.850</text><text x="411.00" y="294.80" text-anchor="end" class="tk">0.750</text><text x="411.00" y="341.50" text-anchor="end" class="tk">0.650</text><text x="411.00" y="388.20" text-anchor="end" class="tk">0.550</text></svg>
<svg class="ic" style="left:356.00px;top:421.80px" width="28.80" height="28.80" viewBox="0 0 24 24"><path fill="#2196f3" d="M7 14H5v5h5v-2H7v-3zm-2-4h2V7h3V5H5v5zm12 7h-3v2h5v-5h-2v3zM14 5v2h3v3h2V5h-5z"/></svg><svg class="ic" style="left:394.20px;top:421.80px" width="28.80" height="28.80" viewBox="0 0 24 24"><path fill="#2196f3" d="M3 17h18v-2H3v2zm0 3h18v-1H3v1zm0-7h18v-3H3v3zm0-9v4h18V4H3z"/></svg><svg class="ic" style="left:432.60px;top:421.80px" width="28.80" height="28.80" viewBox="0 0 24 24"><path fill="#2196f3" d="M12.01 5.5L10 8h4l-1.990-2.5zM18 10v4l2.5-1.990L18 10zM6 10l-2.5 2.010L6 14v-4zm8 6h-4l2.010 2.5L14 16zm7-13H3c-1.100 0-2 .900-2 2v14c0 1.100.900 2 2 2h18c1.100 0 2-.900 2-2V5c0-1.100-.900-2-2-2zm0 16.010H3V4.990h18v14.020z"/></svg>
<div class="b" style="left:326.00px;top:482.00px;width:920.00px;height:42.00px;background:#fff;box-shadow:0 1.2px 6px rgba(0,0,0,0.2);z-index:2"></div><div id="h2" class="t " style="left:344.00px;top:491.80px;font-size:18.00px;color:#000;font-weight:400;font-family:'Liberation Sans',Arial,sans-serif;letter-spacing:-0.006px;z-index:3;">batch_loss</div><div id="n2" class="t " style="left:1181.00px;top:490.00px;font-size:14.40px;color:#949494;font-weight:400;font-family:'Liberation Serif',serif;z-index:3;">1</div>
<div class="b" style="left:326.00px;top:524.00px;width:884.00px;height:1.00px;background:#ccc;z-index:3"></div>
<div class="b" style="left:326.00px;top:525.00px;width:920.00px;height:42.00px;background:#fff;box-shadow:0 1.2px 6px rgba(0,0,0,0.2);z-index:2"></div><div id="h3" class="t " style="left:344.00px;top:534.80px;font-size:18.00px;color:#000;font-weight:400;font-family:'Liberation Sans',Arial,sans-serif;letter-spacing:-0.342px;z-index:3;">epoch_acc</div><div id="n3" class="t " style="left:1181.00px;top:533.00px;font-size:14.40px;color:#949494;font-weight:400;font-family:'Liberation Serif',serif;z-index:3;">1</div>
<div class="b" style="left:326.00px;top:567.00px;width:890.00px;height:360.00px;background:#fff;border:1px solid #d9d9d9;border-top:0;border-radius:0 0 0 3px;box-sizing:border-box"></div>
<div id="ct2" class="t " style="left:351.00px;top:590.00px;font-size:16.80px;color:#000;font-weight:400;font-family:'Liberation Sans',Arial,sans-serif;">epoch_acc</div><svg class="ic ch" style="left:340px;top:607px" width="440" height="300" viewBox="340 607 440 300"><line x1="423.05" y1="623.40" x2="746.85" y2="623.40" stroke="#3c3c3c" stroke-width="1.2" stroke-opacity="0.2"/><line x1="417.05" y1="623.40" x2="423.05" y2="623.40" stroke="#cccccc" stroke-width="1.2" stroke-opacity="1"/><line x1="423.05" y1="650.13" x2="746.85" y2="650.13" stroke="#3c3c3c" stroke-width="1.2" stroke-opacity="0.2"/><line x1="417.05" y1="650.13" x2="423.05" y2="650.13" stroke="#cccccc" stroke-width="1.2" stroke-opacity="1"/><line x1="423.05" y1="676.86" x2="746.85" y2="676.86" stroke="#3c3c3c" stroke-width="1.2" stroke-opacity="0.2"/><line x1="417.05" y1="676.86" x2="423.05" y2="676.86" stroke="#cccccc" stroke-width="1.2" stroke-opacity="1"/><line x1="423.05" y1="703.59" x2="746.85" y2="703.59" stroke="#3c3c3c" stroke-width="1.2" stroke-opacity="0.2"/><line x1="417.05" y1="703.59" x2="423.05" y2="703.59" stroke="#cccccc" stroke-width="1.2" stroke-opacity="1"/><line x1="423.05" y1="730.32" x2="746.85" y2="730.32" stroke="#3c3c3c" stroke-width="1.2" stroke-opacity="0.2"/><line x1="417.05" y1="730.32" x2="423.05" y2="730.32" stroke="#cccccc" stroke-width="1.2" stroke-opacity="1"/><line x1="423.05" y1="757.05" x2="746.85" y2="757.05" stroke="#3c3c3c" stroke-width="1.2" stroke-opacity="0.2"/><line x1="417.05" y1="757.05" x2="423.05" y2="757.05" stroke="#cccccc" stroke-width="1.2" stroke-opacity="1"/><line x1="423.05" y1="783.78" x2="746.85" y2="783.78" stroke="#3c3c3c" stroke-width="1.2" stroke-opacity="0.2"/><line x1="417.05" y1="783.78" x2="423.05" y2="783.78" stroke="#cccccc" stroke-width="1.2" stroke-opacity="1"/><line x1="423.05" y1="810.51" x2="746.85" y2="810.51" stroke="#3c3c3c" stroke-width="1.2" stroke-opacity="0.2"/><line x1="417.05" y1="810.51" x2="423.05" y2="810.51" stroke="#cccccc" stroke-width="1.2" stroke-opacity="1"/><line x1="544.50" y1="623.40" x2="544.50" y2="837.40" stroke="#3c3c3c" stroke-width="1.2" stroke-opacity="0.28"/><line x1="544.50" y1="837.40" x2="544.50" y2="843.40" stroke="#cccccc" stroke-width="1.2" stroke-opacity="1"/><line x1="625.50" y1="623.40" x2="625.50" y2="837.40" stroke="#3c3c3c" stroke-width="1.2" stroke-opacity="0.28"/><line x1="625.50" y1="837.40" x2="625.50" y2="843.40" stroke="#cccccc" stroke-width="1.2" stroke-opacity="1"/><line x1="706.45" y1="623.40" x2="706.45" y2="837.40" stroke="#3c3c3c" stroke-width="1.2" stroke-opacity="0.28"/><line x1="706.45" y1="837.40" x2="706.45" y2="843.40" stroke="#cccccc" stroke-width="1.2" stroke-opacity="1"/><line x1="423.05" y1="622.80" x2="423.05" y2="843.40" stroke="#c4c4c4" stroke-width="1.7" stroke-opacity="1"/><line x1="417.05" y1="837.40" x2="747.45" y2="837.40" stroke="#cccccc" stroke-width="1.2" stroke-opacity="1"/><line x1="746.85" y1="623.40" x2="746.85" y2="843.40" stroke="#d4d4d4" stroke-width="1.6" stroke-opacity="1"/><line x1="463.50" y1="623.40" x2="463.50" y2="837.40" stroke="#3c3c3c" stroke-width="1.8" stroke-opacity="0.42"/><line x1="463.50" y1="837.40" x2="463.50" y2="843.40" stroke="#cccccc" stroke-width="1.2" stroke-opacity="1"/><polyline points="463.5,799.6 544.5,690.8 625.5,659.2 706.45,640.2" fill="none" stroke="#ff7043" stroke-opacity="0.22" stroke-width="2.400"/><polyline points="463.5,799.6 544.5,718.4 625.5,677.5 706.45,652.6" fill="none" stroke="#ff7043" stroke-width="2.400"/><circle cx="706.5" cy="652.5" r="4.600" fill="#ff7043"/><text x="410.40" y="654.00" text-anchor="end" class="tk">0.880</text><text x="410.40" y="708.00" text-anchor="end" class="tk">0.860</text><text x="410.40" y="761.00" text-anchor="end" class="tk">0.840</text><text x="410.40" y="815.00" text-anchor="end" class="tk">0.820</text><text x="463.50" y="860.70" text-anchor="middle" class="tk">0.000</text><text x="544.50" y="860.70" text-anchor="middle" class="tk">1.000</text><text x="625.50" y="860.70" text-anchor="middle" class="tk">2.000</text><text x="706.45" y="860.70" text-anchor="middle" class="tk">3.000</text></svg>
<svg class="ic" style="left:426px;top:861.50px" width="42" height="42" viewBox="0 0 42 42"><circle cx="21.050" cy="20" r="18.800" fill="#dcdcdc"/></svg><svg class="ic" style="left:356.00px;top:868.30px" width="28.80" height="28.80" viewBox="0 0 24 24"><path fill="#2196f3" d="M7 14H5v5h5v-2H7v-3zm-2-4h2V7h3V5H5v5zm12 7h-3v2h5v-5h-2v3zM14 5v2h3v3h2V5h-5z"/></svg><svg class="ic" style="left:394.20px;top:868.30px" width="28.80" height="28.80" viewBox="0 0 24 24"><path fill="#2196f3" d="M3 17h18v-2H3v2zm0 3h18v-1H3v1zm0-7h18v-3H3v3zm0-9v4h18V4H3z"/></svg><svg class="ic" style="left:432.60px;top:868.30px" width="28.80" height="28.80" viewBox="0 0 24 24"><path fill="#1e88e5" d="M12.01 5.5L10 8h4l-1.990-2.5zM18 10v4l2.5-1.990L18 10zM6 10l-2.5 2.010L6 14v-4zm8 6h-4l2.010 2.5L14 16zm7-13H3c-1.100 0-2 .900-2 2v14c0 1.100.900 2 2 2h18c1.100 0 2-.900 2-2V5c0-1.100-.900-2-2-2zm0 16.010H3V4.990h18v14.020z"/></svg>
<div class="b" style="left:326.00px;top:928.00px;width:920.00px;height:42.00px;background:#fff;box-shadow:0 1.2px 6px rgba(0,0,0,0.2);z-index:2"></div><div id="h4" class="t " style="left:344.00px;top:937.80px;font-size:18.00px;color:#000;font-weight:400;font-family:'Liberation Sans',Arial,sans-serif;letter-spacing:-0.388px;z-index:3;">epoch_loss</div><div id="n4" class="t " style="left:1181.00px;top:936.00px;font-size:14.40px;color:#949494;font-weight:400;font-family:'Liberation Serif',serif;z-index:3;">1</div>
</main>
</body>
</html>
